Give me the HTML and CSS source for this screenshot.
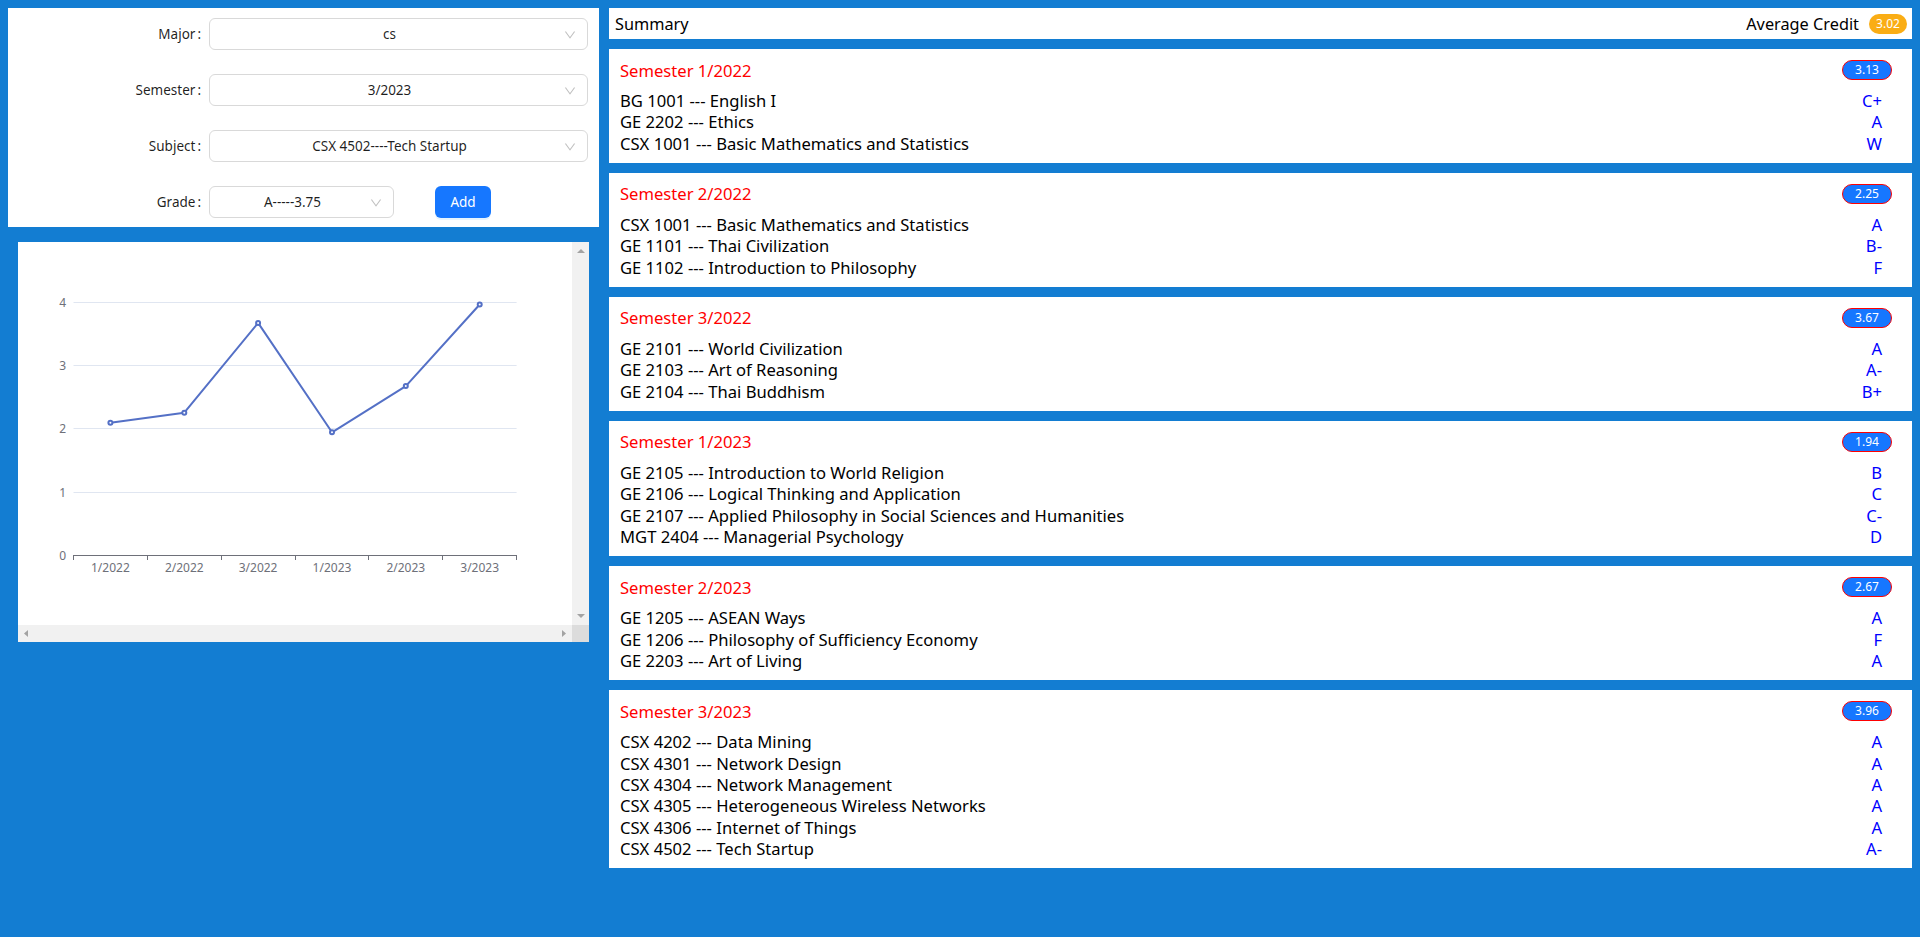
FILE: index.html
```html
<!DOCTYPE html>
<html lang="en">
<head>
<meta charset="utf-8">
<title>Grades</title>
<link rel="stylesheet" href="styles.css">
</head>
<body>
<div class="app">
  <div class="left">
    <div class="form-panel">
      <div class="form-row">
        <label class="form-label">Major<span class="colon">:</span></label>
        <div class="select select-wide"><span class="select-text">cs</span><svg class="chev" viewBox="64 64 896 896"><path d="M884 256h-75c-5.1 0-9.9 2.5-12.9 6.6L512 654.2 227.9 262.6c-3-4.1-7.8-6.6-12.9-6.6h-75c-6.5 0-10.3 7.4-6.5 12.7l352.6 486.1c12.8 17.6 39 17.6 51.7 0l352.6-486.1c3.9-5.300.1-12.7-6.4-12.7z"/></svg></div>
      </div>
      <div class="form-row">
        <label class="form-label">Semester<span class="colon">:</span></label>
        <div class="select select-wide"><span class="select-text">3/2023</span><svg class="chev" viewBox="64 64 896 896"><path d="M884 256h-75c-5.1 0-9.9 2.5-12.9 6.6L512 654.2 227.9 262.6c-3-4.1-7.8-6.6-12.9-6.6h-75c-6.5 0-10.3 7.4-6.5 12.7l352.6 486.1c12.8 17.6 39 17.6 51.7 0l352.6-486.1c3.9-5.300.1-12.7-6.4-12.7z"/></svg></div>
      </div>
      <div class="form-row">
        <label class="form-label">Subject<span class="colon">:</span></label>
        <div class="select select-wide"><span class="select-text">CSX 4502----Tech Startup</span><svg class="chev" viewBox="64 64 896 896"><path d="M884 256h-75c-5.1 0-9.9 2.5-12.9 6.6L512 654.2 227.9 262.6c-3-4.1-7.8-6.6-12.9-6.6h-75c-6.5 0-10.3 7.4-6.5 12.7l352.6 486.1c12.8 17.6 39 17.6 51.7 0l352.6-486.1c3.9-5.300.1-12.7-6.4-12.7z"/></svg></div>
      </div>
      <div class="form-row">
        <label class="form-label">Grade<span class="colon">:</span></label>
        <div class="select select-grade"><span class="select-text">A-----3.75</span><svg class="chev" viewBox="64 64 896 896"><path d="M884 256h-75c-5.1 0-9.9 2.5-12.9 6.6L512 654.2 227.9 262.6c-3-4.1-7.8-6.6-12.9-6.6h-75c-6.5 0-10.3 7.4-6.5 12.7l352.6 486.1c12.8 17.6 39 17.6 51.7 0l352.6-486.1c3.9-5.300.1-12.7-6.4-12.7z"/></svg></div>
        <button class="btn-add" type="button">Add</button>
      </div>
    </div>

    <div class="chart-box">
      <div class="chart-view">
        <svg class="chart" width="600" height="400" viewBox="0 0 600 400">
          <g class="grid">
            <line x1="55.5" y1="60.5" x2="498.6" y2="60.5"/>
            <line x1="55.5" y1="123.5" x2="498.6" y2="123.5"/>
            <line x1="55.5" y1="186.5" x2="498.6" y2="186.5"/>
            <line x1="55.5" y1="250.5" x2="498.6" y2="250.5"/>
          </g>
          <g class="axis">
            <line x1="55.5" y1="313.5" x2="498.6" y2="313.5"/>
            <line x1="55.5" y1="313" x2="55.5" y2="318"/>
            <line x1="129.5" y1="313" x2="129.5" y2="318"/>
            <line x1="203.5" y1="313" x2="203.5" y2="318"/>
            <line x1="277.5" y1="313" x2="277.5" y2="318"/>
            <line x1="350.5" y1="313" x2="350.5" y2="318"/>
            <line x1="424.5" y1="313" x2="424.5" y2="318"/>
            <line x1="498.5" y1="313" x2="498.5" y2="318"/>
          </g>
          <g class="ylab">
            <text x="48" y="64.5">4</text>
            <text x="48" y="127.5">3</text>
            <text x="48" y="190.5">2</text>
            <text x="48" y="254.5">1</text>
            <text x="48" y="317.5">0</text>
          </g>
          <g class="xlab">
            <text x="92.4" y="330">1/2022</text>
            <text x="166.3" y="330">2/2022</text>
            <text x="240.1" y="330">3/2022</text>
            <text x="314" y="330">1/2023</text>
            <text x="387.8" y="330">2/2023</text>
            <text x="461.7" y="330">3/2023</text>
          </g>
          <polyline class="series" points="92.4,180.8 166.3,170.7 240.1,80.9 314,190.3 387.8,144.1 461.7,62.5"/>
          <g class="dots">
            <circle cx="92.4" cy="180.8" r="2"/>
            <circle cx="166.3" cy="170.7" r="2"/>
            <circle cx="240.1" cy="80.9" r="2"/>
            <circle cx="314" cy="190.3" r="2"/>
            <circle cx="387.8" cy="144.1" r="2"/>
            <circle cx="461.7" cy="62.5" r="2"/>
          </g>
        </svg>
      </div>
      <div class="vscroll">
        <svg class="arrow" width="8" height="4" viewBox="0 0 8 4"><polygon points="4,0 8,4 0,4"/></svg>
        <svg class="arrow" width="8" height="4" viewBox="0 0 8 4"><polygon points="0,0 8,0 4,4"/></svg>
      </div>
      <div class="hscroll">
        <svg class="arrow" width="4" height="7" viewBox="0 0 4 7"><polygon points="0,3.5 4,0 4,7"/></svg>
        <svg class="arrow" width="4" height="7" viewBox="0 0 4 7"><polygon points="0,0 4,3.5 0,7"/></svg>
      </div>
      <div class="corner"></div>
    </div>
  </div>

  <div class="right">
    <div class="summary">
      <span class="summary-title">Summary</span>
      <span class="avg"><span class="avg-label">Average Credit</span><span class="badge-avg">3.02</span></span>
    </div>

    <div class="card">
      <div class="card-head"><span class="sem-title">Semester 1/2022</span><span class="gpa">3.13</span></div>
      <div class="course"><span>BG 1001 --- English I</span><span class="grade">C+</span></div>
      <div class="course"><span>GE 2202 --- Ethics</span><span class="grade">A</span></div>
      <div class="course"><span>CSX 1001 --- Basic Mathematics and Statistics</span><span class="grade">W</span></div>
    </div>

    <div class="card">
      <div class="card-head"><span class="sem-title">Semester 2/2022</span><span class="gpa">2.25</span></div>
      <div class="course"><span>CSX 1001 --- Basic Mathematics and Statistics</span><span class="grade">A</span></div>
      <div class="course"><span>GE 1101 --- Thai Civilization</span><span class="grade">B-</span></div>
      <div class="course"><span>GE 1102 --- Introduction to Philosophy</span><span class="grade">F</span></div>
    </div>

    <div class="card">
      <div class="card-head"><span class="sem-title">Semester 3/2022</span><span class="gpa">3.67</span></div>
      <div class="course"><span>GE 2101 --- World Civilization</span><span class="grade">A</span></div>
      <div class="course"><span>GE 2103 --- Art of Reasoning</span><span class="grade">A-</span></div>
      <div class="course"><span>GE 2104 --- Thai Buddhism</span><span class="grade">B+</span></div>
    </div>

    <div class="card">
      <div class="card-head"><span class="sem-title">Semester 1/2023</span><span class="gpa">1.94</span></div>
      <div class="course"><span>GE 2105 --- Introduction to World Religion</span><span class="grade">B</span></div>
      <div class="course"><span>GE 2106 --- Logical Thinking and Application</span><span class="grade">C</span></div>
      <div class="course"><span>GE 2107 --- Applied Philosophy in Social Sciences and Humanities</span><span class="grade">C-</span></div>
      <div class="course"><span>MGT 2404 --- Managerial Psychology</span><span class="grade">D</span></div>
    </div>

    <div class="card">
      <div class="card-head"><span class="sem-title">Semester 2/2023</span><span class="gpa">2.67</span></div>
      <div class="course"><span>GE 1205 --- ASEAN Ways</span><span class="grade">A</span></div>
      <div class="course"><span>GE 1206 --- Philosophy of Sufficiency Economy</span><span class="grade">F</span></div>
      <div class="course"><span>GE 2203 --- Art of Living</span><span class="grade">A</span></div>
    </div>

    <div class="card">
      <div class="card-head"><span class="sem-title">Semester 3/2023</span><span class="gpa">3.96</span></div>
      <div class="course"><span>CSX 4202 --- Data Mining</span><span class="grade">A</span></div>
      <div class="course"><span>CSX 4301 --- Network Design</span><span class="grade">A</span></div>
      <div class="course"><span>CSX 4304 --- Network Management</span><span class="grade">A</span></div>
      <div class="course"><span>CSX 4305 --- Heterogeneous Wireless Networks</span><span class="grade">A</span></div>
      <div class="course"><span>CSX 4306 --- Internet of Things</span><span class="grade">A</span></div>
      <div class="course"><span>CSX 4502 --- Tech Startup</span><span class="grade">A-</span></div>
    </div>
  </div>
</div>
</body>
</html>
```

FILE: styles.css
```css
html {
  background: #137dd2;
}
body {
  margin: 8px;
  background: #137dd2;
  font-family: "Noto Sans", "Open Sans", sans-serif;
  color: #000;
}
.app {
  display: grid;
  grid-template-columns: 591px 1fr;
  column-gap: 10px;
  align-items: start;
}

/* ---------- form ---------- */
.form-panel {
  background: #fff;
  padding: 10px 11px 9px 0;
  display: flex;
  flex-direction: column;
  gap: 24px;
}
.form-row {
  display: flex;
  align-items: center;
  height: 32px;
}
.form-label {
  width: 201px;
  flex: none;
  text-align: right;
  padding-right: 8px;
  box-sizing: border-box;
  font-size: 13.5px;
  color: rgba(0, 0, 0, 0.88);
}
.colon {
  margin-left: 2px;
}
.select {
  height: 32px;
  box-sizing: border-box;
  border: 1px solid #d9d9d9;
  border-radius: 6px;
  background: #fff;
  display: flex;
  align-items: center;
  padding: 0 11px;
  position: relative;
}
.select-wide {
  flex: 1;
}
.select-grade {
  width: 185px;
  flex: none;
}
.select-text {
  flex: 1;
  text-align: center;
  padding-right: 18px;
  font-size: 13.5px;
  color: rgba(0, 0, 0, 0.88);
  white-space: nowrap;
}
.chev {
  position: absolute;
  right: 11px;
  top: 10px;
  width: 12px;
  height: 12px;
  fill: rgba(0, 0, 0, 0.25);
}
.btn-add {
  margin-left: 41px;
  width: 56px;
  height: 32px;
  border: none;
  border-radius: 6px;
  background: #1677ff;
  color: #fff;
  font-family: inherit;
  font-size: 13.5px;
  padding: 0;
  box-shadow: 0 2px 0 rgba(5, 145, 255, 0.1);
}

/* ---------- chart ---------- */
.chart-box {
  margin: 15px 0 0 10px;
  width: 571px;
  height: 400px;
  display: grid;
  grid-template-columns: 1fr 17px;
  grid-template-rows: 1fr 17px;
  background: #fff;
}
.chart-view {
  overflow: hidden;
}
.chart {
  display: block;
}
.grid line {
  stroke: #e0e6f1;
  stroke-width: 1;
}
.axis line {
  stroke: #6e7079;
  stroke-width: 1;
}
.ylab text, .xlab text {
  font-family: "Noto Sans", sans-serif;
  font-size: 12px;
  fill: #6e7079;
}
.ylab text {
  text-anchor: end;
}
.xlab text {
  text-anchor: middle;
}
.series {
  fill: none;
  stroke: #5470c6;
  stroke-width: 2;
  stroke-linejoin: bevel;
}
.dots circle {
  fill: #fff;
  stroke: #5470c6;
  stroke-width: 2;
}
.vscroll {
  background: #f1f1f1;
  display: flex;
  flex-direction: column;
  justify-content: space-between;
  align-items: center;
  padding: 7px 0;
}
.hscroll {
  background: #f1f1f1;
  display: flex;
  justify-content: space-between;
  align-items: center;
  padding: 0 6px;
}
.corner {
  background: #dcdcdc;
}
.arrow {
  display: block;
  fill: #a3a3a3;
}

/* ---------- right ---------- */
.right {
  display: flex;
  flex-direction: column;
  gap: 10px;
}
.summary {
  background: #fff;
  height: 31px;
  display: flex;
  align-items: center;
  justify-content: space-between;
  padding: 0 5px 0 6px;
  font-size: 16.3px;
}
.avg {
  display: flex;
  align-items: center;
  gap: 10px;
}
.badge-avg {
  background: #faad14;
  color: #fff;
  font-size: 12px;
  height: 20px;
  line-height: 20px;
  min-width: 38px;
  box-sizing: border-box;
  text-align: center;
  border-radius: 10px;
}
.card {
  background: #fff;
  padding: 10px 20px 9px 11px;
  font-size: 16.6px;
}
.card-head {
  display: flex;
  justify-content: space-between;
  align-items: center;
  height: 22px;
  margin-bottom: 9px;
}
.sem-title {
  color: #ff0000;
}
.gpa {
  width: 50px;
  height: 20px;
  box-sizing: border-box;
  border: 1px solid #ff0000;
  border-radius: 10px;
  background: #1677ff;
  color: #fff;
  font-size: 12px;
  line-height: 18px;
  text-align: center;
}
.course {
  display: flex;
  justify-content: space-between;
  height: 21.33px;
  line-height: 21.33px;
  white-space: nowrap;
}
.grade {
  color: #0000ff;
  padding-right: 10px;
}
```
